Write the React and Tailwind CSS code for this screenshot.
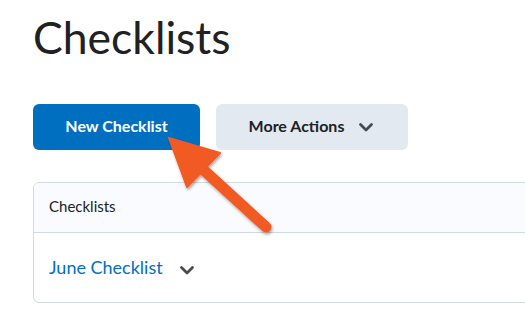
import React from "react";

const Chevron = ({ className }) => (
  <svg viewBox="0 0 18 18" className={className} fill="none">
    <path d="M3.5 6.5 L9 12 L14.5 6.5" stroke="currentColor" strokeWidth="2.8" strokeLinecap="round" strokeLinejoin="round" />
  </svg>
);

export default function App() {
  return (
    <div className="relative w-[525px] h-[317px] overflow-hidden bg-white" style={{ fontFamily: "Lato, 'Noto Sans', sans-serif" }}>
      <div className="pl-[33px] pt-[9px]">
        <h1 className="text-[44.5px] leading-[56px] text-[#202122] font-normal">Checklists</h1>
        <div className="mt-[39px] flex gap-[16px]">
          <button className="w-[167px] h-[46px] rounded-[6px] bg-[#006fbf] text-white font-bold text-[16px] pb-[2px]">New Checklist</button>
          <button className="w-[192px] h-[46px] rounded-[6px] bg-[#e3e9f1] text-[#202122] font-bold text-[16px] pb-[2px] flex items-center justify-center gap-[13px]">
            More Actions
            <Chevron className="w-[18px] h-[18px] text-[#494c4e] mt-[2px]" />
          </button>
        </div>
        <div className="mt-[32px] w-[540px] rounded-[6px] border border-[#d3d9e3] overflow-hidden">
          <div className="h-[50px] bg-[#f9fbff] border-b border-[#d3d9e3] flex items-center pl-[15px] pb-[2px] text-[15px] text-[#202122]">Checklists</div>
          <div className="h-[69px] flex items-center pl-[15px] gap-[15px]">
            <span className="text-[18px] text-[#006fbf]">June Checklist</span>
            <Chevron className="w-[18px] h-[18px] text-[#494c4e] mt-[4px]" />
          </div>
        </div>
      </div>
      <svg className="absolute left-0 top-0" width="525" height="317" viewBox="0 0 525 317">
        <defs>
          <filter id="sh" x="-20%" y="-20%" width="140%" height="140%">
            <feDropShadow dx="1" dy="2" stdDeviation="1.5" floodColor="#000" floodOpacity="0.35" />
          </filter>
        </defs>
        <g filter="url(#sh)" fill="#f15a24" stroke="#f15a24">
          <line x1="196" y1="163" x2="266" y2="227" strokeWidth="11" strokeLinecap="round" />
          <polygon points="169,138 220,153 187,187" strokeWidth="2" strokeLinejoin="round" />
        </g>
      </svg>
    </div>
  );
}
